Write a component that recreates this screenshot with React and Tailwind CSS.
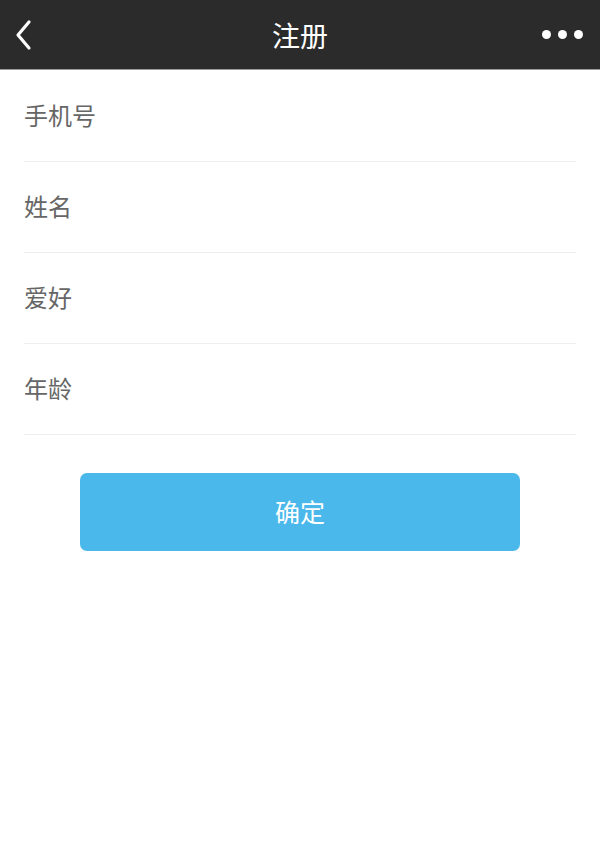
import React from 'react';

const fields = ['手机号', '姓名', '爱好', '年龄'];

const App = () => {
    return (
        <div
            className="min-h-[857px] bg-white"
            style={{ fontFamily: '"Noto Sans CJK SC", "Noto Sans", sans-serif' }}
        >
            {/* Header */}
            <header className="h-[70px] bg-[#2b2b2b] border-b border-[#9a9a9a] grid grid-cols-[80px_1fr_80px] items-center px-[14px]">
                <button className="w-[24px] h-[32px] flex items-center">
                    <svg width="20" height="32" viewBox="0 0 20 32" fill="none">
                        <path d="M15 3 L4 16 L15 29" stroke="#ffffff" strokeWidth="3.2" strokeLinecap="round" strokeLinejoin="round" />
                    </svg>
                </button>
                <h1 className="text-white text-[28px] leading-none text-center">注册</h1>
                <div className="flex items-center justify-end gap-[7px] pr-[3px]">
                    <span className="w-[9px] h-[9px] rounded-full bg-white"></span>
                    <span className="w-[9px] h-[9px] rounded-full bg-white"></span>
                    <span className="w-[9px] h-[9px] rounded-full bg-white"></span>
                </div>
            </header>

            {/* Form */}
            <div className="px-[24px] pt-[1px]">
                {fields.map((label) => (
                    <div key={label} className="h-[91px] border-b border-[#eeeeee] flex items-center">
                        <input
                            placeholder={label}
                            className="w-full text-[24px] text-[#666] placeholder:text-[#666] outline-none bg-transparent -mt-[2px]"
                        />
                    </div>
                ))}
            </div>

            <div className="flex justify-center pt-[38px]">
                <button className="w-[440px] h-[78px] rounded-[7px] bg-[#4ab8ea] text-white text-[25px]">
                    确定
                </button>
            </div>
        </div>
    );
};

export default App;
